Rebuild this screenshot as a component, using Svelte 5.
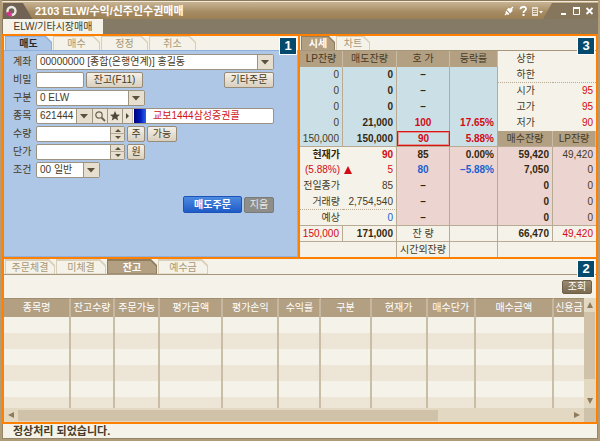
<script>
const orderTabs = ['매도', '매수', '정정', '취소']
const quoteTabs = ['시세', '차트']
const listTabs = ['주문체결', '미체결', '잔고', '예수금']

let orderTab = $state('매도')
let quoteTab = $state('시세')
let listTab = $state('잔고')

let password = $state('')
let code = $state('621444')
let qty = $state('')
let price = $state('')

const limits = [
  { label: '하한', value: '' },
  { label: '시가', value: '95' },
  { label: '고가', value: '95' },
  { label: '저가', value: '90' },
]

const asks = [
  { lp: '0', qty: '0', price: '–', rate: '' },
  { lp: '0', qty: '0', price: '–', rate: '' },
  { lp: '0', qty: '0', price: '–', rate: '' },
  { lp: '0', qty: '21,000', price: '100', rate: '17.65%' },
]

const bids = [
  { label: '현재가', value: '90', price: '85', rate: '0.00%', qty: '59,420', lp: '49,420' },
  { label: '(5.88%)', value: '5', price: '80', rate: '–5.88%', qty: '7,050', lp: '0' },
  { label: '전일종가', value: '85', price: '–', rate: '', qty: '0', lp: '0' },
  { label: '거래량', value: '2,754,540', price: '–', rate: '', qty: '0', lp: '0' },
  { label: '예상', value: '0', price: '–', rate: '', qty: '0', lp: '0' },
]

const columns = [
  { name: '종목명', width: 67 },
  { name: '잔고수량', width: 44 },
  { name: '주문가능', width: 45 },
  { name: '평가금액', width: 63 },
  { name: '평가손익', width: 56 },
  { name: '수익률', width: 42 },
  { name: '구분', width: 50 },
  { name: '현재가', width: 56 },
  { name: '매수단가', width: 48 },
  { name: '매수금액', width: 78 },
  { name: '신용금', width: 30 },
]
const emptyRows = [0, 1, 2, 3, 4, 5]
</script>

{#snippet tabs(items, current, pick, kind)}
  <nav class="tabs tabs--{kind}">
    {#each items as item}
      <button class="tab" class:tab--active={item === current} onclick={() => pick(item)}>
        <span>{item}</span>
      </button>
    {/each}
  </nav>
{/snippet}

{#snippet chevron()}
  <svg class="chevron" viewBox="0 0 16 14" width="16" height="14" aria-hidden="true">
    <rect width="16" height="14" fill="#e6dece" />
    <path d="M0.5 0V14" stroke="#9f947f" />
    <path d="M4 5H12L8 9.5Z" fill="#5b503c" />
  </svg>
{/snippet}

{#snippet spinner()}
  <span class="spinner">
    <button type="button" aria-label="증가"><svg viewBox="0 0 14 7" width="14" height="7"><path d="M4 5H10L7 2Z" fill="#5b503c" /></svg></button>
    <button type="button" aria-label="감소"><svg viewBox="0 0 14 7" width="14" height="7"><path d="M4 2H10L7 5Z" fill="#5b503c" /></svg></button>
  </span>
{/snippet}

<div class="window">
  <header class="titlebar">
    <svg class="titlebar__logo" viewBox="0 0 30 17" width="30" height="17" aria-hidden="true">
      <path d="M0 0H20L30 17H0Z" fill="#706353" />
      <circle cx="8.5" cy="8" r="4" fill="none" stroke="#efe9e6" stroke-width="2.4" />
      <path d="M4.6 9A4 4 0 0 0 9 12" fill="none" stroke="#e0409c" stroke-width="2.4" />
      <path d="M3 11L8 8L7 14Z" fill="#d92f8d" />
    </svg>
    <h1>2103 ELW/수익/신주인수권매매</h1>
    <div class="titlebar__tools">
      <button aria-label="연결">
        <svg viewBox="0 0 12 12" width="12" height="12"><path d="M2 10L4 8M10 2L8 4" stroke="#fff" stroke-width="1.3" /><path d="M3 5.5L6.5 9L5 10L2.5 8ZM3.8 4.8L5.5 3L7.5 3.5L9 2.5L9.5 6L7.2 8.2Z" fill="#fff" /></svg>
      </button>
      <button aria-label="도움말">
        <svg viewBox="0 0 12 12" width="12" height="12"><path d="M3.5 4.2C3.5 1 9 1 9 4C9 6 6.4 5.8 6.4 8" fill="none" stroke="#fff" stroke-width="1.8" /><rect x="5.5" y="9" width="2" height="2" fill="#fff" /></svg>
      </button>
      <button aria-label="메뉴">
        <svg viewBox="0 0 12 12" width="12" height="12"><rect x="1" y="2" width="6" height="9" fill="#e8dfd0" /><path d="M2 4.5H6M2 6.5H6M2 8.5H6" stroke="#9b8360" /><path d="M8 6H12L10 8.5Z" fill="#fff" /></svg>
      </button>
    </div>
    <div class="titlebar__controls">
      <button aria-label="최소화">
        <svg viewBox="0 0 13 12" width="13" height="12"><path d="M4 9H9" stroke="#fff" stroke-width="2" /></svg>
      </button>
      <button aria-label="최대화">
        <svg viewBox="0 0 13 12" width="13" height="12"><path d="M3.5 3V9.5H9.5V3" fill="none" stroke="#fff" /><path d="M3 3H10" stroke="#fff" stroke-width="2" /></svg>
      </button>
      <button aria-label="닫기">
        <svg viewBox="0 0 13 12" width="13" height="12"><path d="M3.5 3L9.5 9M9.5 3L3.5 9" stroke="#fff" stroke-width="1.8" /></svg>
      </button>
    </div>
  </header>

  <div class="menu">
    <button class="menu__tab">ELW/기타시장매매</button>
  </div>

  <main class="panels">
    <section class="panel panel--order">
      <b class="badge">1</b>
      {@render tabs(orderTabs, orderTab, (t) => (orderTab = t), 'order')}
      <form class="order" onsubmit={(e) => e.preventDefault()}>
        <div class="field">
          <label for="account">계좌</label>
          <span class="box box--fill">
            <select id="account"><option>00000000 [종합(은행연계)] 홍길동</option></select>
            {@render chevron()}
          </span>
        </div>
        <div class="field">
          <label for="password">비밀</label>
          <input id="password" class="box box--password" type="password" bind:value={password} />
          <button type="button" class="btn btn--balance">잔고(F11)</button>
          <button type="button" class="btn btn--other">기타주문</button>
        </div>
        <div class="field">
          <label for="kind">구분</label>
          <span class="box box--kind">
            <select id="kind"><option>0 ELW</option></select>
            {@render chevron()}
          </span>
        </div>
        <div class="field">
          <label for="code">종목</label>
          <div class="box stock">
            <input id="code" bind:value={code} />
            <button type="button" aria-label="목록">{@render chevron()}</button>
            <button type="button" class="stock__tool" aria-label="검색">
              <svg viewBox="0 0 14 14" width="14" height="14"><circle cx="6" cy="6" r="3.2" fill="none" stroke="#6d6250" stroke-width="1.2" /><path d="M8.5 8.5L12 12" stroke="#6d6250" stroke-width="1.8" /></svg>
            </button>
            <button type="button" class="stock__tool" aria-label="관심">
              <svg viewBox="0 0 14 14" width="14" height="14"><path d="M7 2L8.5 5.4L12 5.7L9.3 8L10.2 11.5L7 9.6L3.8 11.5L4.7 8L2 5.7L5.5 5.4Z" fill="#4f4739" /></svg>
            </button>
            <button type="button" class="stock__tool stock__tool--next" aria-label="다음">
              <svg viewBox="0 0 9 14" width="9" height="14"><path d="M3 4V10L6 7Z" fill="#4f4739" /></svg>
            </button>
            <span class="stock__mark"></span>
            <output for="code">교보1444삼성증권콜</output>
          </div>
        </div>
        <div class="field">
          <label for="qty">수량</label>
          <span class="box box--number">
            <input id="qty" bind:value={qty} />
            {@render spinner()}
          </span>
          <button type="button" class="btn btn--unit">주</button>
          <button type="button" class="btn btn--able">가능</button>
        </div>
        <div class="field">
          <label for="price">단가</label>
          <span class="box box--number">
            <input id="price" bind:value={price} />
            {@render spinner()}
          </span>
          <button type="button" class="btn btn--unit">원</button>
        </div>
        <div class="field">
          <label for="cond">조건</label>
          <span class="box box--cond">
            <select id="cond"><option>00 일반</option></select>
            {@render chevron()}
          </span>
        </div>
        <div class="actions">
          <button class="btn btn--sell">매도주문</button>
          <button type="reset" class="btn btn--clear">지움</button>
        </div>
      </form>
    </section>

    <section class="panel">
      <b class="badge">3</b>
      {@render tabs(quoteTabs, quoteTab, (t) => (quoteTab = t), 'quote')}
      <table class="quote">
        <colgroup>
          <col style:width="43px" />
          <col style:width="54px" />
          <col style:width="53px" />
          <col style:width="48px" />
          <col style:width="55px" />
          <col style:width="43px" />
        </colgroup>
        <tbody>
          <tr>
            <th>LP잔량</th>
            <th>매도잔량</th>
            <th>호 가</th>
            <th>등락률</th>
            <td class="limit">상한</td>
            <td></td>
          </tr>
          {#each asks as row, i}
            <tr>
              <td class="ask line">{row.lp}</td>
              <td class="ask line strong">{row.qty}</td>
              <td class="ask line strong center" class:up={row.rate}>{row.price}</td>
              <td class="ask line strong up">{row.rate}</td>
              <td class="limit" class:dotted={i === 0}>{limits[i].label}</td>
              <td class="up" class:dotted={i === 0}>{limits[i].value}</td>
            </tr>
          {/each}
          <tr class="short">
            <td class="ask line">150,000</td>
            <td class="ask line strong">150,000</td>
            <td class="ask strong center up best">90</td>
            <td class="ask line strong up">5.88%</td>
            <th>매수잔량</th>
            <th>LP잔량</th>
          </tr>
          {#each bids as row, i}
            <tr class:short={i === 4} class:first={i === 0}>
              <td class:strong={i === 0} class:up={i === 1} class:dotted={i === 3}>{row.label}</td>
              <td class="line" class:strong={i === 0} class:up={i < 2} class:down={i === 4} class:dotted={i === 3}>
                {#if i === 1}
                  <span class="change">
                    <svg viewBox="0 0 8 8" width="8" height="8" role="img" aria-label="상승"><path d="M4 0L8 8H0Z" fill="#d20a14" /></svg>
                    {row.value}
                  </span>
                {:else}
                  {row.value}
                {/if}
              </td>
              <td class="bid line strong center" class:down={i === 1}>{row.price}</td>
              <td class="bid line strong" class:down={i === 1}>{row.rate}</td>
              <td class="bid line strong">{row.qty}</td>
              <td class="bid">{row.lp}</td>
            </tr>
          {/each}
          <tr class="total">
            <td class="line up">150,000</td>
            <td class="line strong">171,000</td>
            <td class="line center">잔 량</td>
            <td class="line"></td>
            <td class="line strong">66,470</td>
            <td class="up">49,420</td>
          </tr>
          <tr class="total">
            <td></td>
            <td class="line"></td>
            <td class="line center">시간외잔량</td>
            <td class="line"></td>
            <td></td>
            <td></td>
          </tr>
        </tbody>
      </table>
    </section>

    <section class="panel panel--list">
      <b class="badge">2</b>
      {@render tabs(listTabs, listTab, (t) => (listTab = t), 'list')}
      <div class="toolbar">
        <button class="btn btn--query">조회</button>
      </div>
      <div class="list">
        <table>
          <colgroup>
            {#each columns as column}
              <col style:width="{column.width}px" />
            {/each}
          </colgroup>
          <thead>
            <tr>
              {#each columns as column}
                <th>{column.name}</th>
              {/each}
            </tr>
          </thead>
          <tbody>
            {#each emptyRows as row (row)}
              <tr>
                {#each columns as column}
                  <td></td>
                {/each}
              </tr>
            {/each}
          </tbody>
        </table>
        <div class="scroll scroll--y">
          <svg viewBox="0 0 12 14" width="12" height="14" aria-hidden="true"><path d="M3 10H9L6 4Z" fill="#8f7b5c" /></svg>
          <span class="thumb thumb--y"></span>
          <svg viewBox="0 0 12 14" width="12" height="14" aria-hidden="true"><path d="M3 4H9L6 10Z" fill="#8f7b5c" /></svg>
        </div>
        <div class="scroll scroll--x">
          <svg viewBox="0 0 14 12" width="14" height="12" aria-hidden="true"><path d="M10 3V9L4 6Z" fill="#8f7b5c" /></svg>
          <span class="track"><span class="thumb thumb--x"></span></span>
          <svg viewBox="0 0 14 12" width="14" height="12" aria-hidden="true"><path d="M4 3V9L10 6Z" fill="#8f7b5c" /></svg>
        </div>
        <div class="corner"></div>
      </div>
    </section>
  </main>

  <footer class="status">정상처리 되었습니다.</footer>
</div>

<style>
:global(body) {
  margin: 0;
  background: #b09c78;
}

.window {
  --ink: #453a26;
  --cream: #f5f2e9;
  --tan: #b3a083;
  --line: #b9ab93;
  --orange: #ff8000;
  display: flex;
  flex-direction: column;
  padding: 0 2px 2px;
  background: #b09c78;
  color: var(--ink);
  font-family: "Liberation Sans", "Noto Sans CJK KR", sans-serif;
  font-size: 10px;
  line-height: 14px;
}

button,
input,
select {
  margin: 0;
  padding: 0;
  border: 0;
  border-radius: 0;
  outline: 0;
  background: none;
  color: inherit;
  font: inherit;
  appearance: none;
}

button {
  cursor: pointer;
}

svg {
  display: block;
}

.titlebar {
  display: flex;
  align-items: center;
  height: 16px;
  border-top: 1px solid #8c7a58;
  box-shadow: inset 0 1px #f0e8d8;
  padding-top: 2px;
  background: linear-gradient(#cbb899, #a68c64 60%, #9c7f54);
}

.titlebar__logo {
  margin-left: 1px;
}

h1 {
  flex: 1;
  margin: 0 0 0 2px;
  color: #fff;
  font-size: 11px;
  line-height: 16px;
  white-space: nowrap;
}

.titlebar__tools {
  display: flex;
  gap: 2px;
}

.titlebar__controls {
  display: flex;
  padding: 2px 2px 2px 14px;
  background: #85765c;
  clip-path: polygon(9px 0, 100% 0, 100% 100%, 0 100%);
}

.menu {
  display: flex;
  height: 15px;
  padding-left: 1px;
  background: #857a65;
}

.menu__tab {
  width: 100px;
  background: var(--cream);
  line-height: 15px;
}

.panels {
  display: grid;
  grid-template-columns: 294fr 296fr;
  gap: 2px;
  padding: 2px;
  background: var(--orange);
}

.panel {
  position: relative;
  display: flex;
  flex-direction: column;
  min-width: 0;
  background: var(--cream);
}

.panel--list {
  grid-column: 1 / -1;
}

.badge {
  position: absolute;
  top: 1px;
  right: 1px;
  z-index: 1;
  width: 16px;
  border: 1px solid #fff;
  background: #044a6c;
  color: #fff;
  font-size: 13px;
  line-height: 16px;
  text-align: center;
}

.tabs {
  display: flex;
  gap: 1px;
  height: 14px;
  padding-left: 1px;
  border-bottom: 1px solid #a6977c;
}

.tab {
  width: 50px;
  padding: 1px 1px 0;
  background: #d9cfb8;
  color: #a89874;
  clip-path: polygon(0 0, calc(100% - 6px) 0, 100% 6px, 100% 100%, 0 100%);
}

.tab span {
  display: block;
  height: 13px;
  background: var(--cream);
  line-height: 13px;
  clip-path: polygon(0 0, calc(100% - 6px) 0, 100% 6px, 100% 100%, 0 100%);
}

.tab--active {
  background: #8f7d60;
  color: #fff;
  font-weight: bold;
}

.tab--active span {
  background: var(--tan);
}

.tabs--order {
  border-color: #8fb0dc;
}

.tabs--order .tab {
  width: 47px;
}

.tabs--order .tab--active {
  background: #8fb0dc;
  color: #2b2a2c;
}

.tabs--order .tab--active span {
  background: #afc7e6;
}

.tabs--quote .tab {
  width: 34px;
}

.tabs--list {
  height: 15px;
}

.order {
  display: flex;
  flex: 1;
  flex-direction: column;
  gap: 2px;
  padding: 3px 23px 0 9px;
  border-right: 1px solid #94b1dc;
  border-bottom: 1px solid #94b1dc;
  background: #afc7e6;
}

.field {
  display: flex;
  gap: 2px;
  height: 16px;
}

.field label {
  width: 21px;
  line-height: 16px;
}

.box {
  display: grid;
  box-sizing: border-box;
  height: 16px;
  border: 1px solid #9c9282;
  border-radius: 2px;
  background: #fff;
}

.box select,
.box input {
  grid-area: 1 / 1;
  min-width: 0;
  height: 14px;
  padding-left: 3px;
  line-height: 14px;
}

.box > .chevron {
  grid-area: 1 / 1;
  justify-self: end;
  pointer-events: none;
}

.box--fill {
  flex: 1;
}

.box--password {
  width: 48px;
}

.box--kind {
  width: 109px;
}

.box--cond {
  width: 64px;
}

.box--number {
  grid-template-columns: 1fr 14px;
  width: 89px;
}

.spinner {
  display: grid;
  grid-template-rows: 7px 7px;
  border-left: 1px solid #9f947f;
  background: #e6dece;
}

.spinner button + button {
  box-shadow: 0 -1px #b5aa97;
}

.stock {
  display: flex;
  flex: 1;
}

.stock input {
  width: 36px;
}

.stock__tool {
  border-left: 1px solid #9f947f;
  background: #ece5d8;
}

.stock__tool--next {
  border-right: 1px solid #c5bcab;
}

.stock__mark {
  width: 12px;
  margin-left: 1px;
  background: linear-gradient(90deg, #00007c, #0018b8 50%, #2a62ee);
}

.stock output {
  margin-left: 7px;
  color: #cf1420;
  white-space: nowrap;
}

.btn {
  box-sizing: border-box;
  height: 16px;
  border: 1px solid #968b78;
  border-radius: 2px;
  background: linear-gradient(#f5f1e8, #d9cfbd);
  line-height: 14px;
  white-space: nowrap;
}

.btn--balance {
  width: 57px;
}

.btn--other {
  width: 50px;
  margin-left: auto;
}

.btn--unit {
  width: 18px;
}

.btn--able {
  width: 30px;
}

.actions {
  display: flex;
  align-items: center;
  justify-content: flex-end;
  gap: 2px;
  margin-top: 16px;
}

.btn--sell {
  width: 59px;
  height: 17px;
  border-color: #1c53b8;
  background: linear-gradient(#4d8ae0, #1f5bc6);
  color: #fff;
  font-weight: bold;
}

.btn--clear {
  width: 30px;
  border-color: #7a7a78;
  background: #8d8d8a;
  color: #e8e8e6;
}

table {
  width: 100%;
  border-spacing: 0;
  table-layout: fixed;
}

th,
td {
  padding: 0;
  white-space: nowrap;
}

.quote td,
.quote th {
  box-sizing: border-box;
  height: 16px;
  padding-right: 3px;
  line-height: 14px;
  text-align: right;
}

.quote .short td,
.quote .short th {
  height: 15px;
}

.quote th {
  padding: 0;
  border-right: 1px solid #c9bba4;
  background: var(--tan);
  font-weight: normal;
  text-align: center;
}

.quote .line {
  border-right: 1px solid var(--line);
}

.quote .ask {
  background: #cbdfe7;
}

.quote .bid {
  background: #ecd5d0;
}

.quote .center {
  padding: 0;
  text-align: center;
}

.quote .limit {
  padding-right: 18px;
}

.quote .dotted {
  border-bottom: 1px dotted #b9ab93;
}

.quote .strong {
  color: #33280f;
  font-weight: bold;
}

.quote .up {
  color: #d20a14;
}

.quote .down {
  color: #1c5fd0;
}

.quote .best {
  border: 1px solid #d81414;
  box-shadow: inset 0 0 0 1px #e29494;
  line-height: 12px;
}

.quote .first td,
.quote .total td {
  border-top: 1px solid var(--line);
}

.change {
  display: flex;
  align-items: center;
  justify-content: space-between;
  padding-left: 1px;
}

.toolbar {
  display: flex;
  align-items: center;
  justify-content: flex-end;
  height: 23px;
  padding-right: 4px;
}

.btn--query {
  width: 30px;
  height: 14px;
  border-color: #6e5f48;
  background: linear-gradient(#9a8a70, #7a6a50);
  color: #fff;
  line-height: 12px;
}

.list {
  display: grid;
  grid-template-columns: 1fr 12px;
  grid-template-rows: 110px 14px;
  overflow: hidden;
}

.list table {
  align-self: start;
}

.list th {
  height: 19px;
  box-sizing: border-box;
  border-top: 1px solid #a28e70;
  border-right: 2px solid #c6b79e;
  background: var(--tan);
  color: #fff;
  font-weight: normal;
}

.list td {
  box-sizing: border-box;
  height: 16px;
  border-right: 2px solid #c9bda6;
}

.list th:last-child,
.list td:last-child {
  border-right: 0;
}

.list tbody tr:nth-child(even) {
  background: #ede5d5;
}

.list tbody tr:last-child td {
  height: 11px;
}

.scroll {
  display: flex;
  background: #e3d9c3;
}

.scroll--y {
  flex-direction: column;
  justify-content: space-between;
}

.scroll--x {
  align-items: center;
}

.thumb {
  background: #d0c2a8;
}

.thumb--y {
  width: 11px;
  height: 67px;
  margin-bottom: 15px;
}

.track {
  flex: 1;
}

.thumb--x {
  display: block;
  width: 76%;
  height: 11px;
}

.corner {
  background: #cfc2aa;
}

.status {
  padding-left: 10px;
  border: 1px solid #94866a;
  border-top: 0;
  background: var(--cream);
  font-size: 11px;
  font-weight: bold;
  line-height: 14px;
}
</style>
